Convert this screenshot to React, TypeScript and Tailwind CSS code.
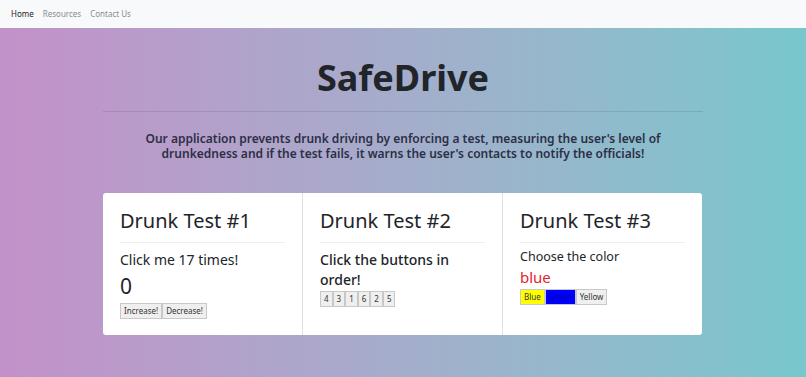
import React from "react";

export default function App() {
  const font = { fontFamily: '"Noto Sans", "Open Sans", sans-serif' };
  const btn = "text-[8px] leading-[12px] px-[3px] py-[1px] border border-[#c8c8c8] text-[#333]";
  return (
    <div style={font} className="min-h-[377px] w-full bg-gradient-to-r from-[#c291c9] to-[#77c7cd] text-[#212529]">
      <nav className="h-[28px] bg-[#f8f9fa] flex items-center px-[11px] gap-[9px] text-[8px]">
        <span className="text-[#212529]">Home</span>
        <span className="text-[#8a8d90]">Resources</span>
        <span className="text-[#8a8d90]">Contact Us</span>
      </nav>
      <div className="w-[600px] mx-auto pt-[28px]">
        <h1 className="text-center text-[36px] leading-[44px] font-bold">SafeDrive</h1>
        <div className="mt-[11px] border-t border-black/10"></div>
        <p className="mt-[19px] px-[37px] text-center text-[12px] leading-[15px] font-semibold text-[#2c2f45]">
          Our application prevents drunk driving by enforcing a test, measuring the user's level of drunkedness and if the test fails, it warns the user's contacts to notify the officials!
        </p>
        <div className="mt-[32px] flex">
          <div className="w-[200px] h-[142px] bg-white rounded-l-[3px] border-r border-[#dee2e6] px-[17px] pt-[14px]">
            <h2 className="text-[20px] leading-[28px]">Drunk Test #1</h2>
            <div className="mt-[7px] w-[165px] border-t border-[#eeeeee]"></div>
            <div className="mt-[7px] text-[14px] leading-[20px]">Click me 17 times!</div>
            <div className="mt-[4px] text-[21px] leading-[24px]">0</div>
            <div className="mt-[5px] flex">
              <button className={`${btn} bg-[#efefef]`}>Increase!</button>
              <button className={`${btn} bg-[#efefef]`}>Decrease!</button>
            </div>
          </div>
          <div className="w-[200px] h-[142px] bg-white border-r border-[#dee2e6] px-[17px] pt-[14px]">
            <h2 className="text-[20px] leading-[28px]">Drunk Test #2</h2>
            <div className="mt-[7px] w-[165px] border-t border-[#eeeeee]"></div>
            <div className="mt-[7px] text-[14px] leading-[20px] font-medium w-[150px]">Click the buttons in order!</div>
            <div className="mt-[1px] flex">
              {["4", "3", "1", "6", "2", "5"].map((n) => (
                <button key={n} className={`${btn} bg-[#efefef]`}>{n}</button>
              ))}
            </div>
          </div>
          <div className="w-[199px] h-[142px] bg-white rounded-r-[3px] px-[17px] pt-[14px]">
            <h2 className="text-[20px] leading-[28px]">Drunk Test #3</h2>
            <div className="mt-[7px] w-[165px] border-t border-[#eeeeee]"></div>
            <div className="mt-[5px] text-[12.5px] leading-[18px]">Choose the color</div>
            <div className="mt-[1px] text-[15px] leading-[20px] text-[#e8222b]">blue</div>
            <div className="mt-[2px] flex">
              <button className={`${btn} bg-[#ffff00]`}>Blue</button>
              <button className="text-[8px] leading-[12px] px-[3px] py-[1px] border border-[#c8c8c8] bg-[#0000ff] text-[#0000aa]">Green</button>
              <button className={`${btn} bg-[#efefef]`}>Yellow</button>
            </div>
          </div>
        </div>
      </div>
    </div>
  );
}
